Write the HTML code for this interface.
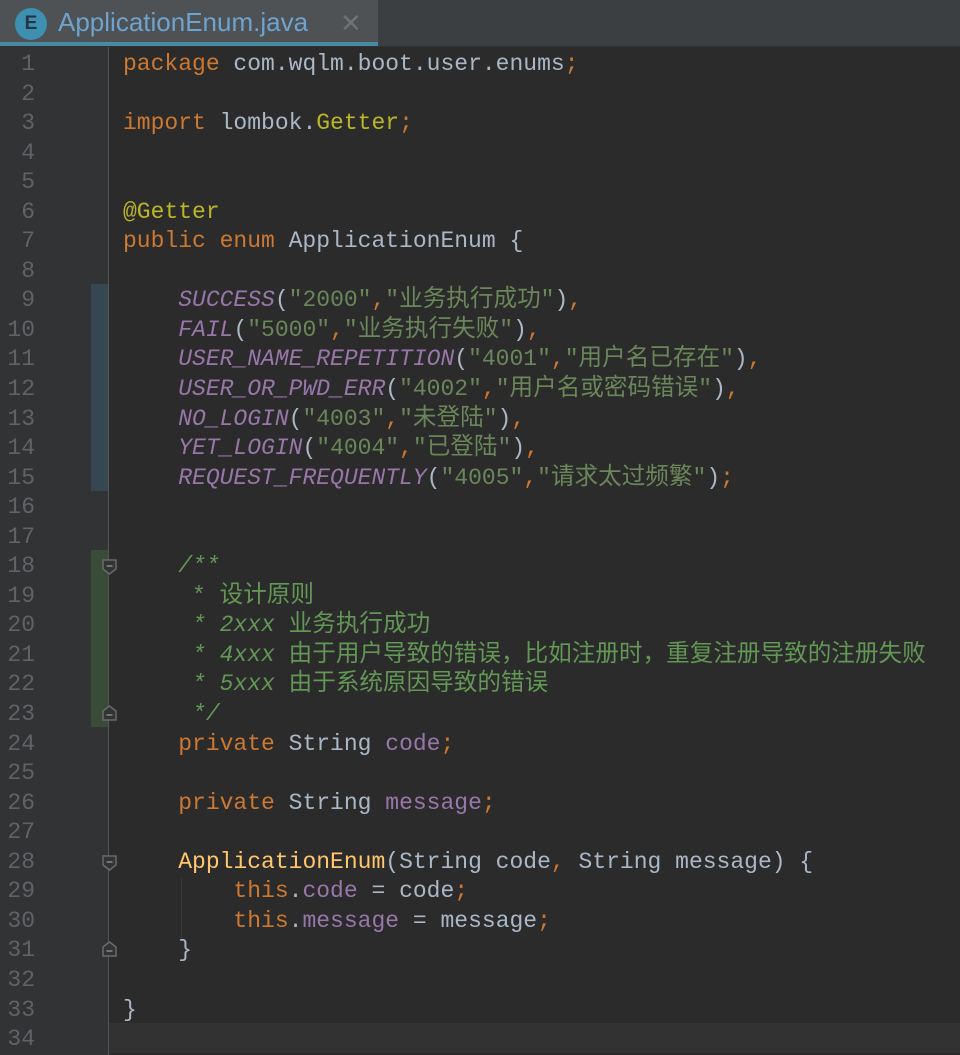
<!DOCTYPE html>
<html><head><meta charset="utf-8"><style>
*{margin:0;padding:0}
body{width:960px;height:1055px;background:#2b2b2b;overflow:hidden;position:relative;font-family:"Liberation Mono","Noto Sans CJK SC",monospace}
.tabbar{position:absolute;left:0;top:0;width:960px;height:46px;background:#3c3f41;border-bottom:1px solid #323232}
.tab{position:absolute;left:0;top:0;width:378px;height:42px;background:#4e5254}
.tabline{position:absolute;left:0;top:42px;width:378px;height:4px;background:#4a8aa0}
.icon{position:absolute;left:15px;top:8px;width:32px;height:32px;border-radius:50%;background:#3e8fb0;color:#243642;font:bold 19px "Liberation Sans",sans-serif;text-align:center;line-height:32px}
.tname{position:absolute;left:58px;top:7px;font:26px "Liberation Sans",sans-serif;color:#6ea3cf}
.x{position:absolute;left:340px;top:8px;font:26px "Liberation Sans",sans-serif;color:#6e7275}
.gutter{position:absolute;left:0;top:47px;width:109px;height:1008px;background:#313335}
.sep{position:absolute;left:108px;top:47px;width:1px;height:1008px;background:#555}
.cur{position:absolute;left:109px;top:1023px;width:851px;height:30px;background:#323232}
.mb{position:absolute;left:91px;top:284px;width:17px;height:207px;background:#374752}
.mg{position:absolute;left:91px;top:550px;width:17px;height:177px;background:#384c38}
pre{position:absolute;top:50px;font-size:23px;line-height:29.55px;font-family:"Liberation Mono","Noto Sans CJK SC",monospace}
.nums{left:0;width:35px;text-align:right;color:#606366}
.code{left:123px;color:#a9b7c6}
.z{font-size:23.6px;line-height:0}
.k{color:#cc7832}.a{color:#bbb529}.e{color:#9876aa;font-style:italic}.f{color:#9876aa}.s{color:#6a8759}.c{color:#629755}.ci{color:#629755;font-style:italic}.m{color:#ffc66d}.g{color:#bbb529}
.fold{position:absolute;left:102px;width:15px;height:16px}
.guide{position:absolute;left:181px;top:878px;width:1px;height:60px;background:#3b3b3b}
</style></head><body>
<div class="tabbar"><div class="tab"></div><div class="tabline"></div><div class="icon">E</div><div class="tname">ApplicationEnum.java</div><div class="x">✕</div></div>
<div class="gutter"></div>
<div class="cur"></div>
<div class="mb"></div><div class="mg"></div>
<div class="sep"></div>
<svg class="fold" style="top:559px" viewBox="0 0 15 16"><path d="M1 1H14V10L7.5 15L1 10Z" fill="#313335" stroke="#6b6b6b" stroke-width="1.5"/><path d="M4.5 7H10.5" stroke="#888" stroke-width="1.5"/></svg>
<svg class="fold" style="top:705px" viewBox="0 0 15 16"><path d="M1 15H14V6L7.5 1L1 6Z" fill="#313335" stroke="#6b6b6b" stroke-width="1.5"/><path d="M4.5 10H10.5" stroke="#888" stroke-width="1.5"/></svg>
<svg class="fold" style="top:855px" viewBox="0 0 15 16"><path d="M1 1H14V10L7.5 15L1 10Z" fill="#313335" stroke="#6b6b6b" stroke-width="1.5"/><path d="M4.5 7H10.5" stroke="#888" stroke-width="1.5"/></svg>
<svg class="fold" style="top:941px" viewBox="0 0 15 16"><path d="M1 15H14V6L7.5 1L1 6Z" fill="#313335" stroke="#6b6b6b" stroke-width="1.5"/><path d="M4.5 10H10.5" stroke="#888" stroke-width="1.5"/></svg>
<div class="guide"></div>
<pre class="nums">1
2
3
4
5
6
7
8
9
10
11
12
13
14
15
16
17
18
19
20
21
22
23
24
25
26
27
28
29
30
31
32
33
34</pre>
<pre class="code"><span class="k">package</span> com.wqlm.boot.user.enums<span class="k">;</span>

<span class="k">import</span> lombok.<span class="g">Getter</span><span class="k">;</span>


<span class="a">@Getter</span>
<span class="k">public enum</span> ApplicationEnum {

    <span class="e">SUCCESS</span>(<span class="s">"2000"</span><span class="k">,</span><span class="s">"<span class="z">业务执行成功</span>"</span>)<span class="k">,</span>
    <span class="e">FAIL</span>(<span class="s">"5000"</span><span class="k">,</span><span class="s">"<span class="z">业务执行失败</span>"</span>)<span class="k">,</span>
    <span class="e">USER_NAME_REPETITION</span>(<span class="s">"4001"</span><span class="k">,</span><span class="s">"<span class="z">用户名已存在</span>"</span>)<span class="k">,</span>
    <span class="e">USER_OR_PWD_ERR</span>(<span class="s">"4002"</span><span class="k">,</span><span class="s">"<span class="z">用户名或密码错误</span>"</span>)<span class="k">,</span>
    <span class="e">NO_LOGIN</span>(<span class="s">"4003"</span><span class="k">,</span><span class="s">"<span class="z">未登陆</span>"</span>)<span class="k">,</span>
    <span class="e">YET_LOGIN</span>(<span class="s">"4004"</span><span class="k">,</span><span class="s">"<span class="z">已登陆</span>"</span>)<span class="k">,</span>
    <span class="e">REQUEST_FREQUENTLY</span>(<span class="s">"4005"</span><span class="k">,</span><span class="s">"<span class="z">请求太过频繁</span>"</span>)<span class="k">;</span>


    <span class="ci">/**</span>
<span class="c">     * <span class="z">设计原则</span></span>
<span class="c">     <span class="ci">* 2xxx</span> <span class="z">业务执行成功</span></span>
<span class="c">     <span class="ci">* 4xxx</span> <span class="z">由于用户导致的错误，比如注册时，重复注册导致的注册失败</span></span>
<span class="c">     <span class="ci">* 5xxx</span> <span class="z">由于系统原因导致的错误</span></span>
<span class="ci">     */</span>
    <span class="k">private</span> String <span class="f">code</span><span class="k">;</span>

    <span class="k">private</span> String <span class="f">message</span><span class="k">;</span>

    <span class="m">ApplicationEnum</span>(String code<span class="k">,</span> String message) {
        <span class="k">this</span>.<span class="f">code</span> = code<span class="k">;</span>
        <span class="k">this</span>.<span class="f">message</span> = message<span class="k">;</span>
    }

}
</pre>
</body></html>
